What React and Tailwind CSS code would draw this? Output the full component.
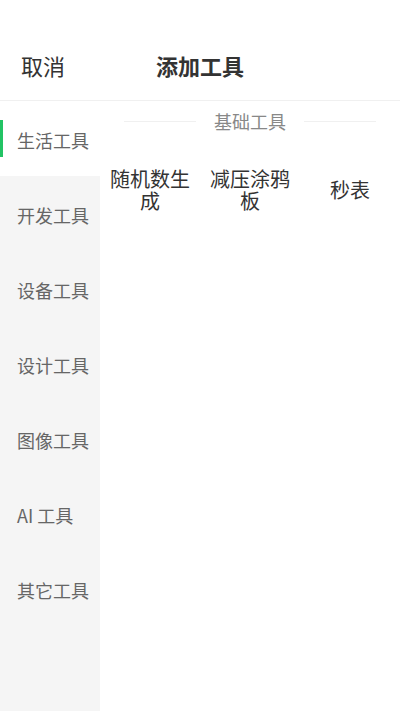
import { useState } from 'react';

const categories = ['生活工具', '开发工具', '设备工具', '设计工具', '图像工具', 'AI 工具', '其它工具'];

const tools = ['随机数生成', '减压涂鸦板', '秒表'];

export default function App() {
  const [active, setActive] = useState(0);

  return (
    <div
      className="w-[400px] h-[711px] bg-white flex flex-col overflow-hidden"
      style={{ fontFamily: '"Noto Sans CJK SC", "Noto Sans", sans-serif' }}
    >
      {/* Header */}
      <div className="pt-[30px] border-b border-[#f0f0f0]">
        <div className="h-[70px] grid grid-cols-[1fr_auto_1fr] items-center">
          <button className="justify-self-start pl-[21px] text-[22px] text-[#333]">取消</button>
          <h1 className="text-[22px] font-bold text-[#333]">添加工具</h1>
          <div />
        </div>
      </div>

      <div className="flex flex-1">
        {/* Sidebar */}
        <div className="w-[100px] bg-[#f5f5f5] flex flex-col">
          {categories.map((c, i) => (
            <button
              key={c}
              onClick={() => setActive(i)}
              className={`relative h-[75px] flex items-center pl-[17px] pt-[3px] text-[18px] text-[#666] ${
                active === i ? 'bg-white' : ''
              }`}
            >
              {active === i && <span className="absolute left-0 top-[19px] w-[3px] h-[37px] bg-[#22c364]" />}
              {c}
            </button>
          ))}
        </div>

        {/* Content */}
        <div className="flex-1">
          <div className="mt-[8px] h-[24px] px-[24px] flex items-center gap-[18px]">
            <div className="flex-1 h-px bg-[#f0f0f0]" />
            <span className="text-[18px] text-[#888] leading-none">基础工具</span>
            <div className="flex-1 h-px bg-[#f0f0f0]" />
          </div>
          <div className="mt-[12px] grid grid-cols-3">
            {tools.map((t) => (
              <div key={t} className="h-[90px] flex items-center justify-center px-[10px] text-center">
                <span className="text-[20px] leading-[22px] text-[#333]">{t}</span>
              </div>
            ))}
          </div>
        </div>
      </div>
    </div>
  );
}
